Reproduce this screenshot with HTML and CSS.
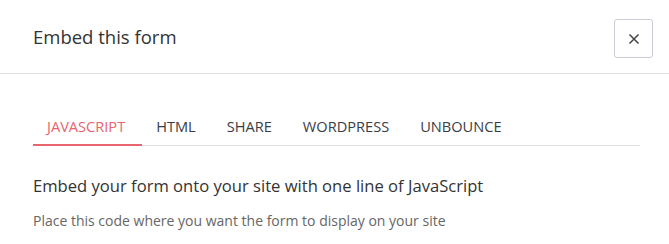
FILE: index.html
```html
<!DOCTYPE html>
<html lang="en">
<head>
  <meta charset="UTF-8" />
  <meta name="viewport" content="width=device-width, initial-scale=1.0" />
  <title>Embed this form</title>
  <link rel="stylesheet" href="styles.css">
</head>
<body>

  <div class="modal">
    <div class="modal-header">
      <h2>Embed this form</h2>
      <button class="close" aria-label="Close">
        <svg width="12" height="12" viewBox="0 0 12 12">
          <path d="M1.5 1.5 L10.5 10.5 M10.5 1.5 L1.5 10.5" stroke="#444" stroke-width="1.5" fill="none" />
        </svg>
      </button>
    </div>

    <div class="modal-body">
      <ul class="tabs">
        <li class="active">JavaScript</li>
        <li>HTML</li>
        <li>Share</li>
        <li>WordPress</li>
        <li>Unbounce</li>
      </ul>

      <h3>Embed your form onto your site with one line of JavaScript</h3>
      <p>Place this code where you want the form to display on your site</p>
    </div>
  </div>

</body>
</html>
```

FILE: styles.css
```css
body {
  margin: 0;
  font-family: "Open Sans", sans-serif;
  background: white;
  color: #333;
}
.modal-header {
  display: flex;
  align-items: center;
  justify-content: space-between;
  height: 74px;
  padding: 0 16px 0 33px;
  border-bottom: 1px solid #e3e3e6;
  box-sizing: border-box;
}
.modal-header h2 {
  margin: 0;
  font-size: 18.5px;
  font-weight: 400;
  color: #333;
}
.close {
  width: 39px;
  height: 39px;
  display: flex;
  align-items: center;
  justify-content: center;
  background: white;
  border: 1px solid #c9ccd4;
  border-radius: 3px;
  padding: 0;
  margin-top: 4px;
  cursor: pointer;
}
.modal-body {
  padding: 37px 29px 0 33px;
}
.tabs {
  display: flex;
  list-style: none;
  margin: 0;
  padding: 0;
  border-bottom: 1px solid #dfe0e4;
}
.tabs li {
  padding: 5px 17px 8px 14px;
  font-size: 14.6px;
  text-transform: uppercase;
  color: #3a3d45;
  border-bottom: 2px solid transparent;
  margin-bottom: -1px;
}
.tabs li.active {
  color: #e8646e;
  border-bottom-color: #e8646e;
}
h3 {
  margin: 28px 0 0;
  font-size: 16.6px;
  font-weight: 400;
  color: #333;
}
p {
  margin: 14px 0 0;
  font-size: 14px;
  color: #666;
}
```
